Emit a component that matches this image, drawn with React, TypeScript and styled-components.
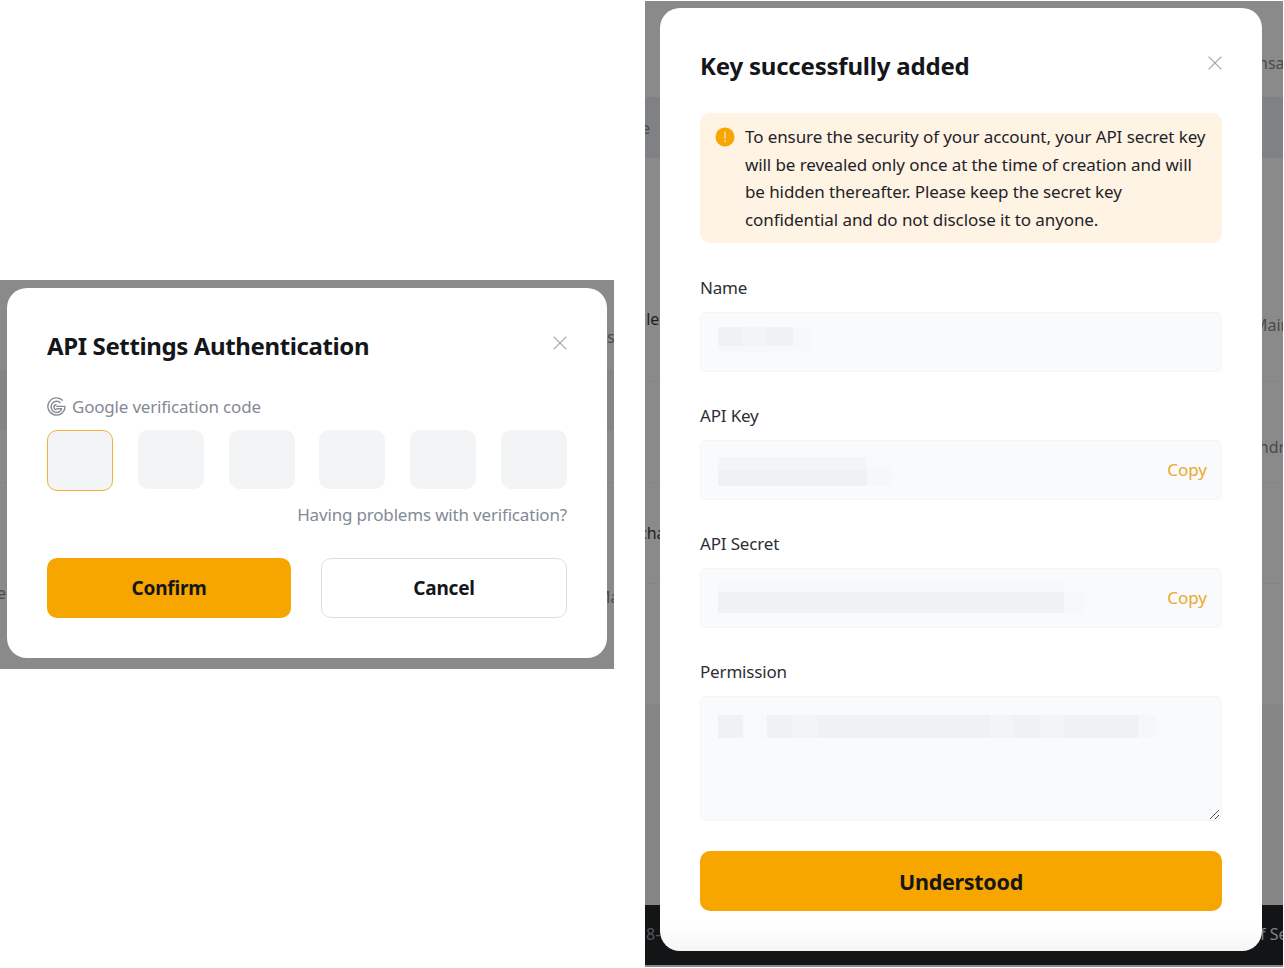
import styled, { createGlobalStyle } from "styled-components"

const GlobalStyle = createGlobalStyle`
  html, body {
    margin: 0;
    padding: 0;
    background: #ffffff;
  }
  body {
    font-family: "Noto Sans", "Liberation Sans", sans-serif;
    color: #1e2329;
  }
  * {
    box-sizing: border-box;
  }
`

const Page = styled.div`
  width: 1284px;
  height: 968px;
  display: flex;
  align-items: flex-start;
  gap: 31px;
  overflow: hidden;
`

const Backdrop = styled.div<{ $top: number; $pad: number; $left: number; $right: number; $bottom: number; $width: number }>`
  position: relative;
  width: ${(p) => p.$width}px;
  margin-top: ${(p) => p.$top}px;
  padding: ${(p) => p.$pad}px ${(p) => p.$right}px ${(p) => p.$bottom}px ${(p) => p.$left}px;
  background: #8a8a8a;
  overflow: hidden;
`

const Stripe = styled.div<{ $y: number; $h: number; $color: string }>`
  position: absolute;
  left: 0;
  right: 0;
  top: ${(p) => p.$y}px;
  height: ${(p) => p.$h}px;
  background: ${(p) => p.$color};
`

const GhostText = styled.span<{ $x: number; $y: number; $color?: string }>`
  position: absolute;
  left: ${(p) => p.$x}px;
  top: ${(p) => p.$y}px;
  font-size: 16px;
  line-height: 20px;
  white-space: nowrap;
  color: ${(p) => p.$color ?? "#4a4a4a"};
`

const Modal = styled.div<{ $width: number; $height: number; $fade?: boolean }>`
  position: relative;
  width: ${(p) => p.$width}px;
  height: ${(p) => p.$height}px;
  padding: 40px;
  border-radius: 20px;
  background: ${(p) => (p.$fade ? "linear-gradient(#ffffff 917px, #f6f6f6 100%)" : "#ffffff")};
`

const Header = styled.div`
  display: flex;
  justify-content: space-between;
  align-items: center;
  height: 36px;
`

const Title = styled.h2<{ $tight?: boolean }>`
  margin: 0;
  font-size: 24px;
  line-height: 36px;
  font-weight: 700;
  letter-spacing: ${(p) => (p.$tight ? -0.38 : -0.2)}px;
  color: #14161a;
`

const CloseButton = styled.button`
  display: flex;
  padding: 0;
  border: 0;
  background: none;
  color: #a3a8b0;
  transform: translate(0, -3px);
`

const CodeLabel = styled.div`
  display: flex;
  align-items: center;
  gap: 6px;
  margin-top: 30px;
  height: 24px;
  font-size: 17px;
  letter-spacing: -0.2px;
  color: #848a94;
`

const CodeRow = styled.div`
  display: flex;
  justify-content: space-between;
  align-items: flex-start;
  margin-top: 12px;
`

const CodeBox = styled.div<{ $active?: boolean }>`
  width: 66px;
  height: ${(p) => (p.$active ? 61 : 59)}px;
  border-radius: 10px;
  background: #f3f4f6;
  border: ${(p) => (p.$active ? "1.5px solid #efb13c" : "0")};
`

const HelpLink = styled.div`
  margin-top: 12px;
  height: 24px;
  line-height: 24px;
  text-align: right;
  font-size: 17px;
  letter-spacing: -0.18px;
  color: #848a94;
`

const ButtonRow = styled.div`
  display: flex;
  justify-content: space-between;
  margin-top: 31px;
`

const ActionButton = styled.button<{ $primary?: boolean; $full?: boolean; $big?: boolean }>`
  width: ${(p) => (p.$full ? "100%" : p.$primary ? "244px" : "246px")};
  height: 60px;
  border-radius: 10px;
  border: ${(p) => (p.$primary ? "0" : "1.5px solid #dcdde2")};
  background: ${(p) => (p.$primary ? "#f7a600" : "#ffffff")};
  font-family: inherit;
  font-size: ${(p) => (p.$big ? 21.5 : 19)}px;
  letter-spacing: ${(p) => (p.$big ? -0.3 : -0.2)}px;
  font-weight: 700;
  color: #14161a;
`

const Alert = styled.div`
  display: flex;
  gap: 10px;
  margin-top: 29px;
  margin-bottom: 33px;
  height: 130px;
  padding: 10px 10px 0 15px;
  border-radius: 10px;
  background: #fff4e3;
`

const AlertIcon = styled.svg`
  flex: none;
  margin-top: 4px;
`

const AlertText = styled.p`
  margin: 0;
  font-size: 17px;
  line-height: 27.6px;
  letter-spacing: -0.09px;
  color: #1e2329;
`

const Field = styled.div`
  margin-bottom: 32px;
`

const FieldLabel = styled.div`
  height: 24px;
  line-height: 24px;
  font-size: 17px;
  letter-spacing: -0.17px;
  color: #2b2f36;
`

const InputBox = styled.div<{ $height: number }>`
  position: relative;
  display: flex;
  justify-content: space-between;
  align-items: flex-start;
  height: ${(p) => p.$height}px;
  margin-top: 12px;
  padding-left: 17px;
  border: 1px solid #f4f5f6;
  border-radius: 6px;
  background: #f9fafb;
`

const Redacted = styled.div<{ $top: number }>`
  margin-top: ${(p) => p.$top}px;
`

const RedactedRow = styled.div<{ $h: number }>`
  display: flex;
  height: ${(p) => p.$h}px;
`

const RedactedSeg = styled.div<{ $w: number; $color: string }>`
  width: ${(p) => p.$w}px;
  background: ${(p) => p.$color};
`

const CopyLink = styled.span`
  align-self: center;
  margin-right: 14px;
  margin-bottom: 2px;
  font-size: 17px;
  color: #e9a92f;
`

const ResizeGrip = styled.svg`
  position: absolute;
  right: 1px;
  bottom: 0;
`

const FooterButton = styled.div`
  margin-top: -2px;
`

type Seg = [number, string]
type Row = { h: number; segs: Seg[] }

const nameBlur: Row[] = [
  { h: 19, segs: [[25, "#f0f1f3"], [24, "#f3f4f5"], [26, "#f0f1f3"], [18, "#f7f8fa"]] },
  { h: 7, segs: [[49, "#f6f7f8"], [44, "#f8f9fa"]] },
]
const keyBlur: Row[] = [
  { h: 12, segs: [[149, "#f4f5f6"], [25, "#f8f9fa"]] },
  { h: 17, segs: [[149, "#f0f1f3"], [25, "#f6f7f9"]] },
]
const secretBlur: Row[] = [
  { h: 10, segs: [[346, "#f7f8f9"], [21, "#f8f9fa"]] },
  { h: 21, segs: [[346, "#f0f1f3"], [21, "#f7f8fa"]] },
]
const permissionBlur: Row[] = [
  {
    h: 23,
    segs: [
      [25, "#f0f1f3"],
      [24, "#f8f9fa"],
      [25, "#f0f1f3"],
      [25, "#f3f4f5"],
      [173, "#f0f1f3"],
      [24, "#f3f4f5"],
      [26, "#f0f1f3"],
      [24, "#f3f4f5"],
      [74, "#f0f1f3"],
      [18, "#f6f7f8"],
    ],
  },
]

const BlurBlock = ({ rows, top }: { rows: Row[]; top: number }) => (
  <Redacted $top={top}>
    {rows.map((row, i) => (
      <RedactedRow key={i} $h={row.h}>
        {row.segs.map((s, j) => (
          <RedactedSeg key={j} $w={s[0]} $color={s[1]} />
        ))}
      </RedactedRow>
    ))}
  </Redacted>
)

const CloseIcon = () => (
  <svg width="14" height="14" viewBox="0 0 14 14" fill="none" stroke="currentColor" strokeWidth="1.3">
    <path d="M0.6 0.6 13.4 13.4M13.4 0.6 0.6 13.4" />
  </svg>
)

const GoogleIcon = () => (
  <svg width="19" height="19" viewBox="0 0 19 19" fill="none" stroke="#848a94" strokeWidth="1.4">
    <path d="M15.8 3.6A8.6 8.6 0 1 0 18.1 9.6" />
    <path d="M13.6 5.8A5.6 5.6 0 1 0 15 11.6" />
    <path d="M9.5 7.8A2.2 2.2 0 0 0 9.5 12.8" />
    <path d="M9.4 9.4H18.2M9.4 11.8H15" />
  </svg>
)

export default function App() {
  return (
    <Page>
      <GlobalStyle />

      <Backdrop $width={614} $top={280} $pad={8} $left={7} $right={7} $bottom={11}>
        <Stripe $y={90} $h={60} $color="#848586" />
        <Stripe $y={202} $h={1} $color="#858585" />
        <GhostText $x={-3} $y={303}>e</GhostText>
        <GhostText $x={597} $y={47}>ns</GhostText>
        <GhostText $x={596} $y={307}>Ma</GhostText>
        <Modal $width={600} $height={370}>
          <Header>
            <Title $tight>API Settings Authentication</Title>
            <CloseButton><CloseIcon /></CloseButton>
          </Header>
          <CodeLabel>
            <GoogleIcon />
            Google verification code
          </CodeLabel>
          <CodeRow>
            <CodeBox $active />
            <CodeBox />
            <CodeBox />
            <CodeBox />
            <CodeBox />
            <CodeBox />
          </CodeRow>
          <HelpLink>Having problems with verification?</HelpLink>
          <ButtonRow>
            <ActionButton $primary>Confirm</ActionButton>
            <ActionButton>Cancel</ActionButton>
          </ButtonRow>
        </Modal>
      </Backdrop>

      <Backdrop $width={638} $top={1} $pad={7} $left={15} $right={21} $bottom={16}>
        <Stripe $y={96} $h={61} $color="#808184" />
        <Stripe $y={380} $h={1} $color="#858585" />
        <Stripe $y={481} $h={1} $color="#858585" />
        <Stripe $y={582} $h={1} $color="#858585" />
        <Stripe $y={703} $h={201} $color="#868686" />
        <Stripe $y={904} $h={60} $color="#131416" />
        <GhostText $x={-4} $y={117}>e</GhostText>
        <GhostText $x={-3} $y={308} $color="#1f1f1f">lle</GhostText>
        <GhostText $x={-6} $y={522} $color="#1f1f1f">cha</GhostText>
        <GhostText $x={1} $y={923} $color="#55575b">8-</GhostText>
        <GhostText $x={613} $y={52}>nsa</GhostText>
        <GhostText $x={608} $y={314}>Main</GhostText>
        <GhostText $x={608} $y={436}>thdr</GhostText>
        <GhostText $x={615} $y={923} $color="#80838a">f Se</GhostText>
        <Modal $width={602} $height={943} $fade>
          <Header>
            <Title>Key successfully added</Title>
            <CloseButton><CloseIcon /></CloseButton>
          </Header>
          <Alert>
            <AlertIcon width="20" height="20" viewBox="0 0 20 20">
              <circle cx="10" cy="10" r="9.5" fill="#f7a600" />
              <path d="M10 5v6.2M10 13.6v1.2" stroke="#ffd98a" strokeWidth="1.6" strokeLinecap="round" />
            </AlertIcon>
            <AlertText>
              To ensure the security of your account, your API secret key will be revealed only once at the time of creation and will be hidden thereafter. Please keep the secret key confidential and do not disclose it to anyone.
            </AlertText>
          </Alert>
          <Field>
            <FieldLabel>Name</FieldLabel>
            <InputBox $height={60}>
              <BlurBlock rows={nameBlur} top={14} />
            </InputBox>
          </Field>
          <Field>
            <FieldLabel>API Key</FieldLabel>
            <InputBox $height={60}>
              <BlurBlock rows={keyBlur} top={16} />
              <CopyLink>Copy</CopyLink>
            </InputBox>
          </Field>
          <Field>
            <FieldLabel>API Secret</FieldLabel>
            <InputBox $height={60}>
              <BlurBlock rows={secretBlur} top={13} />
              <CopyLink>Copy</CopyLink>
            </InputBox>
          </Field>
          <Field>
            <FieldLabel>Permission</FieldLabel>
            <InputBox $height={125}>
              <BlurBlock rows={permissionBlur} top={18} />
              <ResizeGrip width="11" height="11" viewBox="0 0 11 11" fill="none" stroke="#55585e" strokeWidth="1">
                <path d="M1 10 10 1M6 10 10 6" />
              </ResizeGrip>
            </InputBox>
          </Field>
          <FooterButton>
            <ActionButton $primary $full $big>Understood</ActionButton>
          </FooterButton>
        </Modal>
      </Backdrop>
    </Page>
  )
}
